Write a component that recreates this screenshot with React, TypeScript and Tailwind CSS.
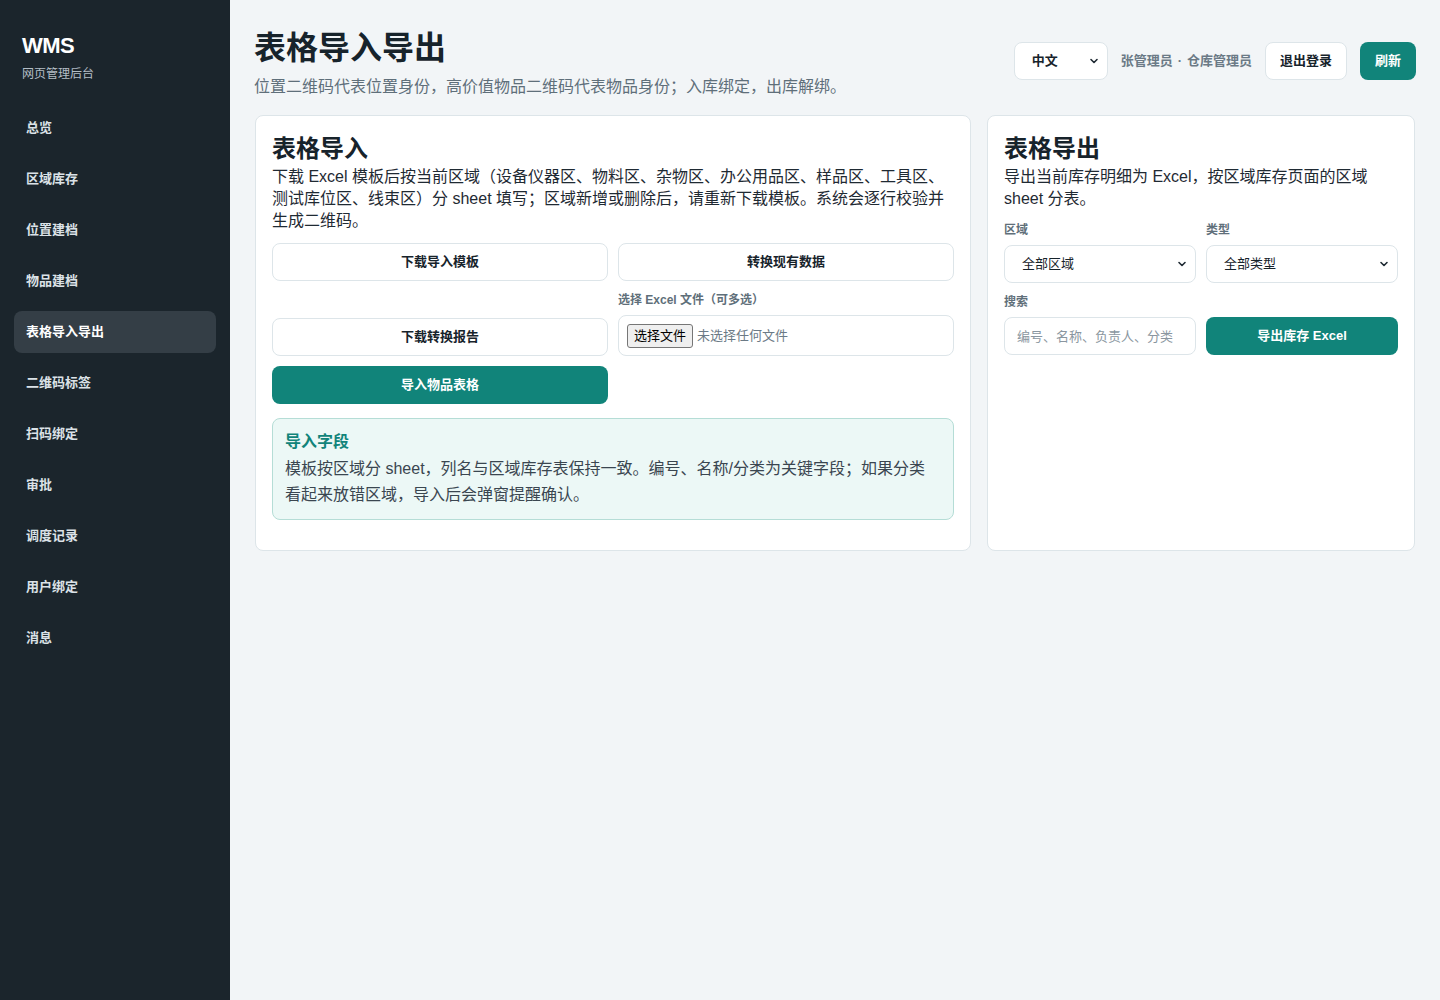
import React from "react";

const font = { fontFamily: '"Liberation Sans", "Noto Sans CJK SC", sans-serif' };

const nav = ["总览", "区域库存", "位置建档", "物品建档", "表格导入导出", "二维码标签", "扫码绑定", "审批", "调度记录", "用户绑定", "消息"];

function Chevron() {
  return (
    <svg width="12" height="12" viewBox="0 0 24 24" fill="none" stroke="#1f2a33" strokeWidth="3.2" strokeLinecap="round" strokeLinejoin="round" className="pointer-events-none absolute right-[8px] top-1/2 -translate-y-1/2">
      <path d="M6 9l6 6 6-6" />
    </svg>
  );
}

function Select({ value, className }: { value: string; className?: string }) {
  return (
    <div className={"relative " + (className || "")}>
      <select
        className="h-full w-full appearance-none rounded-lg border border-[#dde5e9] bg-white pl-[17px] pr-8 text-[13px] text-[#17232b] outline-none"
        defaultValue={value}
        style={font}
      >
        <option>{value}</option>
      </select>
      <Chevron />
    </div>
  );
}

function OutlineBtn({ children, className }: { children: React.ReactNode; className?: string }) {
  return (
    <button className={"flex h-[38px] items-center justify-center rounded-lg border border-[#dde5e9] bg-white text-[13px] font-bold text-[#17232b] " + (className || "")}>
      {children}
    </button>
  );
}

export default function App() {
  return (
    <div className="flex min-h-[1000px] w-full bg-[#f2f5f7]" style={font}>
      <aside className="w-[230px] shrink-0 bg-[#1b252c] px-[14px] pt-[32px]">
        <div className="px-[8px]">
          <div className="text-[22px] font-bold leading-[28px] tracking-[-0.5px] text-white">WMS</div>
          <div className="mt-[5px] text-[12px] leading-[18px] text-[#b4bec6]">网页管理后台</div>
        </div>
        <nav className="mt-[24px] flex flex-col gap-[9px]">
          {nav.map((n) => (
            <div
              key={n}
              className={
                "flex h-[42px] items-center rounded-lg px-[12px] text-[13px] font-bold " +
                (n === "表格导入导出" ? "bg-[#343e46] text-white" : "text-[#dbe2e7]")
              }
            >
              {n}
            </div>
          ))}
        </nav>
      </aside>

      <main className="flex-1 px-[24px] pt-[28px]">
        <header className="flex items-center justify-between">
          <div>
            <h1 className="text-[32px] font-bold leading-[40px] text-[#17232b]">表格导入导出</h1>
            <p className="mt-[7px] text-[16px] leading-[24px] text-[#5f6f7a]">
              位置二维码代表位置身份，高价值物品二维码代表物品身份；入库绑定，出库解绑。
            </p>
          </div>
          <div className="mt-[-6px] flex items-center">
            <Select value="中文" className="h-[38px] w-[94px] font-bold" />
            <span className="ml-[13px] text-[13px] font-bold text-[#6b7a86]">
              张管理员<span className="mx-[5px]">·</span>仓库管理员
            </span>
            <button className="ml-[13px] h-[38px] w-[82px] rounded-lg border border-[#dde5e9] bg-white text-[13px] font-bold text-[#17232b]">
              退出登录
            </button>
            <button className="ml-[13px] h-[38px] w-[56px] rounded-lg bg-[#11847a] text-[13px] font-bold text-white">刷新</button>
          </div>
        </header>

        <div className="ml-px mt-[16px] grid grid-cols-[716px_428px] gap-[16px]">
          <section className="rounded-lg border border-[#dde5e9] bg-white px-[16px] pb-[30px] pt-[16px]">
            <h2 className="text-[24px] font-bold leading-[34px] text-[#17232b]">表格导入</h2>
            <p className="text-[16px] leading-[22px] text-[#1f2a33]">
              下载 Excel 模板后按当前区域（设备仪器区、物料区、杂物区、办公用品区、样品区、工具区、测试库位区、线束区）分 sheet 填写；区域新增或删除后，请重新下载模板。系统会逐行校验并生成二维码。
            </p>
            <div className="mt-[11px] grid grid-cols-2 gap-[10px]">
              <OutlineBtn>下载导入模板</OutlineBtn>
              <OutlineBtn>转换现有数据</OutlineBtn>
              <div className="flex items-end">
                <OutlineBtn className="w-full">下载转换报告</OutlineBtn>
              </div>
              <div>
                <div className="text-[12px] font-bold leading-[18px] text-[#5f6f7a]">选择 Excel 文件（可多选）</div>
                <label className="mt-[6px] flex h-[41px] items-center rounded-lg border border-[#dde5e9] bg-white px-[8px]">
                  <span className="rounded-[3px] border border-[#767676] bg-[#efefef] px-[6px] py-[2px] text-[13px] leading-[18px] text-black">
                    选择文件
                  </span>
                  <span className="ml-[4px] text-[13px] text-[#6b7a86]">未选择任何文件</span>
                  <input type="file" multiple className="hidden" />
                </label>
              </div>
              <button className="flex h-[38px] items-center justify-center rounded-lg bg-[#11847a] text-[13px] font-bold text-white">
                导入物品表格
              </button>
            </div>
            <div className="mt-[14px] rounded-lg border border-[#b5ddd6] bg-[#ecf8f6] pb-[11px] pl-[12px] pr-[24px] pt-[11px]">
              <div className="text-[16px] font-bold leading-[24px] text-[#11847a]">导入字段</div>
              <p className="mt-[2px] text-[16px] leading-[26px] text-[#3a4650]">
                模板按区域分 sheet，列名与区域库存表保持一致。编号、名称/分类为关键字段；如果分类看起来放错区域，导入后会弹窗提醒确认。
              </p>
            </div>
          </section>

          <section className="rounded-lg border border-[#dde5e9] bg-white px-[16px] pt-[16px]">
            <h2 className="text-[24px] font-bold leading-[34px] text-[#17232b]">表格导出</h2>
            <p className="text-[16px] leading-[22px] text-[#1f2a33]">
              导出当前库存明细为 Excel，按区域库存页面的区域 sheet 分表。
            </p>
            <div className="mt-[12px] grid grid-cols-2 gap-x-[10px]">
              <div>
                <div className="text-[12px] font-bold leading-[16px] text-[#5f6f7a]">区域</div>
                <Select value="全部区域" className="mt-[7px] h-[38px]" />
              </div>
              <div>
                <div className="text-[12px] font-bold leading-[16px] text-[#5f6f7a]">类型</div>
                <Select value="全部类型" className="mt-[7px] h-[38px]" />
              </div>
              <div className="mt-[11px]">
                <div className="text-[12px] font-bold leading-[16px] text-[#5f6f7a]">搜索</div>
                <input
                  placeholder="编号、名称、负责人、分类"
                  className="mt-[7px] h-[38px] w-full rounded-lg border border-[#dde5e9] bg-white px-[12px] text-[13px] text-[#17232b] outline-none placeholder:text-[#8a96a0]"
                  style={font}
                />
              </div>
              <div className="flex items-end">
                <button className="h-[38px] w-full rounded-lg bg-[#11847a] text-[13px] font-bold text-white">导出库存 Excel</button>
              </div>
            </div>
          </section>
        </div>
      </main>
    </div>
  );
}
